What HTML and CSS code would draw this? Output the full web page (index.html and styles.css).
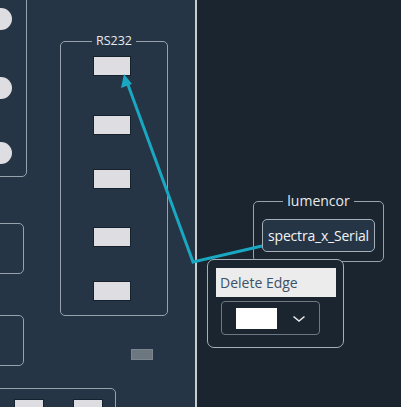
FILE: index.html
```html
<!DOCTYPE html>
<html>
<head>
<meta charset="utf-8">
<link rel="stylesheet" href="styles.css">
</head>
<body>
<div class="app">
  <div class="pane pane-left">
    <div class="node node-io">
      <span class="pin pin-1"></span>
      <span class="pin pin-2"></span>
      <span class="pin pin-3"></span>
    </div>
    <div class="node node-a"></div>
    <div class="node node-b"></div>
    <div class="node node-c">
      <span class="slot slot-1"></span>
      <span class="slot slot-2"></span>
    </div>
    <fieldset class="group group-rs">
      <legend>RS232</legend>
      <span class="port port-1"></span>
      <span class="port port-2"></span>
      <span class="port port-3"></span>
      <span class="port port-4"></span>
      <span class="port port-5"></span>
    </fieldset>
    <span class="mini"></span>
  </div>
  <div class="divider"></div>
  <div class="pane pane-right">
    <fieldset class="group group-lum">
      <legend>lumencor</legend>
      <div class="serial">spectra_x_Serial</div>
    </fieldset>
  </div>
  <svg class="edge" width="401" height="407" viewBox="0 0 401 407">
    <polyline points="262,246 193,262 127,82" fill="none" stroke="#19a7c1" stroke-width="3" stroke-linejoin="miter"/>
    <polygon points="124,74 121,88 132,84" fill="#19a7c1"/>
  </svg>
  <div class="popup">
    <div class="action">Delete Edge</div>
    <div class="select">
      <span class="swatch"></span>
      <svg class="chev" width="14" height="8" viewBox="0 0 14 8"><polyline points="1.5,1.5 7,6 12.5,1.5" fill="none" stroke="#e8e8e8" stroke-width="1.6"/></svg>
    </div>
  </div>
</div>
</body>
</html>
```

FILE: styles.css
```css
* { box-sizing: border-box; }
html, body { margin: 0; padding: 0; }
body {
  width: 401px;
  height: 407px;
  overflow: hidden;
  font-family: "Open Sans", "Noto Sans", sans-serif;
  background: #1a2530;
}
.app {
  position: relative;
  display: flex;
  width: 401px;
  height: 407px;
}
.pane {
  position: relative;
  height: 100%;
  overflow: hidden;
}
.pane-left {
  width: 195px;
  background: #253546;
}
.divider {
  width: 2px;
  background: #c7ccd1;
}
.pane-right {
  flex: 1;
  background: #1a2530;
}
.node {
  position: absolute;
  border: 1.5px solid #98a2ab;
  border-radius: 5px;
}
.node-io { left: -10px; top: -10px; width: 37px; height: 187px; }
.pin {
  position: absolute;
  left: -1px;
  width: 22px;
  height: 22px;
  border-radius: 50%;
  background: #dedde2;
}
.pin-1 { top: 17px; }
.pin-2 { top: 86px; }
.pin-3 { top: 151px; }
.node-a { left: -10px; top: 223px; width: 34px; height: 51px; }
.node-b { left: -10px; top: 315px; width: 34px; height: 51px; }
.node-c { left: -10px; top: 388px; width: 126px; height: 60px; }
.slot {
  position: absolute;
  top: 10px;
  width: 30px;
  height: 20px;
  background: #dedde2;
  border: 1px solid #15212c;
}
.slot-1 { left: 23px; }
.slot-2 { left: 82px; }
.group {
  position: absolute;
  margin: 0;
  padding: 0;
  border: 1.5px solid #98a2ab;
  border-radius: 5px;
}
.group legend {
  padding: 0 4px;
  margin: 0 auto;
  color: #e8eaec;
  line-height: 1;
}
.group-rs {
  left: 60px;
  top: 35px;
  width: 108px;
  height: 281px;
}
.group-rs legend { font-size: 12.5px; }
.port {
  position: absolute;
  left: 32px;
  width: 38px;
  height: 20px;
  background: #dedde2;
  border: 1px solid #15212c;
}
.port-1 { top: 8px; }
.port-2 { top: 67px; }
.port-3 { top: 121px; }
.port-4 { top: 179px; }
.port-5 { top: 233px; }
.mini {
  position: absolute;
  left: 131px;
  top: 349px;
  width: 22px;
  height: 11px;
  background: #6c7780;
  border: 1px solid #7c8690;
}
.group-lum {
  left: 56px;
  top: 194px;
  width: 131px;
  height: 68px;
}
.group-lum legend { font-size: 14px; }
.serial {
  position: absolute;
  left: 8px;
  top: 11px;
  width: 113px;
  height: 33px;
  border: 1.5px solid #a6afb8;
  border-radius: 5px;
  background: #253546;
  color: #f2f3f4;
  font-size: 14px;
  display: flex;
  align-items: center;
  justify-content: center;
  white-space: nowrap;
  letter-spacing: -0.2px;
}
.edge {
  position: absolute;
  left: 0;
  top: 0;
  pointer-events: none;
}
.popup {
  position: absolute;
  left: 207px;
  top: 259px;
  width: 137px;
  height: 89px;
  border: 1.5px solid #a6afb8;
  border-radius: 7px;
  background: #1a2530;
  padding: 8px 8px 0 8px;
  display: flex;
  flex-direction: column;
  gap: 4px;
}
.action {
  width: 120px;
  height: 29px;
  background: #ececec;
  color: #3d5168;
  font-size: 14px;
  line-height: 29px;
  padding-left: 4px;
  white-space: nowrap;
}
.select {
  margin-left: 5px;
  width: 99px;
  height: 34px;
  border: 1.5px solid #6d7882;
  border-radius: 4px;
  display: flex;
  align-items: center;
  padding-left: 14px;
  gap: 15px;
}
.swatch {
  width: 41px;
  height: 21px;
  background: #ffffff;
}
.chev { margin-top: 2px; }
```
